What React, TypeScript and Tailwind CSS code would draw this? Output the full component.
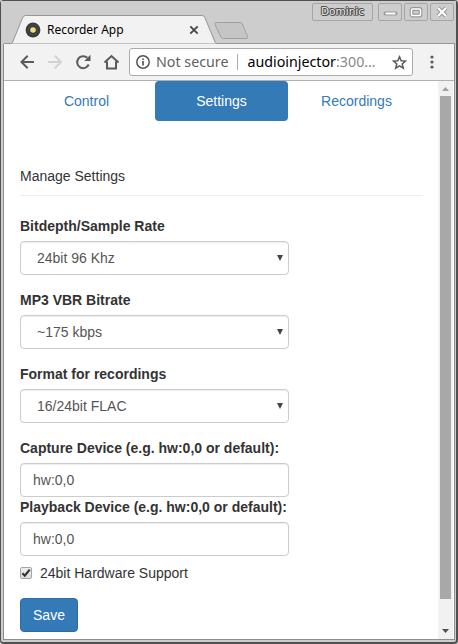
import React from "react";

function TitleBar() {
  return (
    <header className="relative h-[43px] shrink-0 bg-[#cdcdcd]">
      <svg className="absolute -left-px top-0" width="458" height="43" viewBox="0 0 458 43" fill="none">
        <path d="M4 43V42.5H10.5Q12 42.5 12.7 41L22.5 17Q23.3 14.5 25.5 14.5H202Q204 14.5 204.8 16.5L215 41Q215.7 42.5 217 42.5H455V43Z" fill="#f2f2f2" stroke="#969696" />
        <path d="M216.5 21.5H240.5Q241.8 21.5 242.3 23L247.5 35.5Q248 37.5 246.5 37.5H223.5Q221.5 37.5 220.8 36L215 23.5Q214.4 21.5 216.5 21.5Z" fill="#c5c5c5" stroke="#a0a0a0" />
      </svg>
      <div className="relative flex h-full items-start">
        <div className="ml-[24px] mt-[18px] flex h-[22px] w-[174px] items-center">
          <svg className="shrink-0" width="16" height="16" viewBox="0 0 16 16">
            <circle cx="8" cy="8" r="7.4" fill="#3b3b3b" />
            <circle cx="8" cy="8" r="5" fill="none" stroke="#4d4d4b" strokeWidth="1" />
            <circle cx="8" cy="8" r="2.8" fill="#eedf86" />
          </svg>
          <span className="ml-[6px] whitespace-nowrap text-[12px] leading-[22px] text-black">Recorder App</span>
          <svg className="ml-auto" width="10" height="10" viewBox="0 0 10 10" stroke="#454545" strokeWidth="1.8">
            <path d="M1.3 1.3L8.7 8.7M8.7 1.3L1.3 8.7" />
          </svg>
        </div>
        <div className="ml-auto mr-[2px] mt-[2px] flex gap-[2px]">
          <div className="mr-[3px] flex h-[18px] w-[61px] items-center justify-center rounded-[2px] border border-[#a5a5a5] font-['DejaVu_Sans'] text-[10.5px] text-[#eee] [text-shadow:1px_0_0_#4c4c4c,-1px_0_0_#4c4c4c,0_1px_0_#4c4c4c,0_-1px_0_#4c4c4c,1px_1px_0_#666,-1px_-1px_0_#666]">Dominic</div>
          <WindowButton><path d="M7.5 10.5H17.5" stroke="#999" strokeWidth="4" strokeLinecap="round" /><path d="M7.5 10.5H17.5" stroke="#fff" strokeWidth="2" /></WindowButton>
          <WindowButton><rect x="7.5" y="6" width="9" height="6.5" rx="1" stroke="#999" strokeWidth="3.8" /><rect x="7.5" y="6" width="9" height="6.5" rx="1" stroke="#fff" strokeWidth="1.5" /></WindowButton>
          <WindowButton><path d="M8 5L16 13M16 5L8 13" stroke="#999" strokeWidth="4" /><path d="M8 5L16 13M16 5L8 13" stroke="#fff" strokeWidth="2" /></WindowButton>
        </div>
      </div>
    </header>
  );
}

function WindowButton({ children }: { children: React.ReactNode }) {
  return (
    <div className="h-[18px] w-[24px] rounded-[2px] border border-[#a5a5a5]">
      <svg className="-ml-px -mt-px" width="24" height="18" viewBox="0 0 24 18" fill="none">{children}</svg>
    </div>
  );
}

function Toolbar() {
  return (
    <div className="flex h-[37px] shrink-0 items-center border-b border-[#b0b0b0] bg-[#f2f2f2] pl-[15px]">
      <svg width="110" height="18" viewBox="0 0 110 18" fill="none" stroke="#5a5a5a" strokeWidth="2">
        <path d="M15 9H2.5M8.7 2.8L2.5 9L8.7 15.2" />
        <path d="M29 9H42M35.8 2.8L42 9L35.8 15.2" stroke="#d2d2d2" />
        <path d="M69.7 11.5A6 6 0 1 1 68.3 4.8" />
        <path d="M71.5 1.8V8H65.3Z" fill="#5a5a5a" stroke="none" />
        <path d="M85.5 9.6L92.5 3L99.5 9.6M88 8.4V15.5H97V8.4" />
      </svg>
      <div className="flex h-[28px] w-[284px] items-center rounded-[3px] border border-[#ababab] bg-white pl-[6px] pr-[5px] text-[14.25px] leading-[26px]">
        <svg className="shrink-0" width="14" height="14" viewBox="0 0 14 14" fill="none" stroke="#555" strokeWidth="1.5">
          <circle cx="7" cy="7" r="6.2" />
          <path d="M7 6V10.5M7 3.4V5" strokeWidth="1.7" />
        </svg>
        <span className="ml-[6px] whitespace-nowrap text-[#5f5f5f]">Not secure</span>
        <i className="ml-[9px] h-[16px] w-px shrink-0 bg-[#aaa]" />
        <span className="ml-[9px] whitespace-nowrap text-[#888]"><span className="text-black">audioinjector</span>:300…</span>
        <svg className="ml-auto shrink-0" width="15" height="15" viewBox="0 0 15 15" fill="none" stroke="#5a5a5a" strokeWidth="1.5">
          <path d="M7.5 1.8L9.2 5.8L13.5 6.1L10.2 9L11.3 13.2L7.5 10.9L3.7 13.2L4.8 9L1.5 6.1L5.8 5.8Z" />
        </svg>
      </div>
      <svg className="ml-[16.5px]" width="4" height="14" viewBox="0 0 4 14" fill="#5a5a5a">
        <circle cx="2" cy="2" r="1.6" /><circle cx="2" cy="7" r="1.6" /><circle cx="2" cy="12" r="1.6" />
      </svg>
    </div>
  );
}

const fieldClass = "flex h-[34px] w-[269px] items-center rounded-[4px] border border-[#ccc] bg-white text-[#555] shadow-[inset_0_1px_1px_rgba(0,0,0,0.075)]";

function SelectField({ label, value }: { label: string; value: string }) {
  return (
    <div className="mb-[15px]">
      <div className="mb-[5px] font-bold">{label}</div>
      <div className={`${fieldClass} justify-between pl-4 pr-[5px]`}>
        <span>{value}</span>
        <svg width="6" height="6" viewBox="0 0 6 6" fill="#444"><path d="M0 0H6L3 6Z" /></svg>
      </div>
    </div>
  );
}

function TextField({ label, value }: { label: string; value: string }) {
  return (
    <div>
      <div className="mb-[5px] whitespace-nowrap font-bold">{label}</div>
      <div className={`${fieldClass} px-3`}>{value}</div>
    </div>
  );
}

function Page() {
  return (
    <main className="min-w-0 flex-1 bg-white px-[15px] font-['Liberation_Sans',Arial,sans-serif] text-[14px] leading-[20px] text-[#333]">
      <nav className="grid grid-cols-3 gap-[2px] text-center text-[#337ab7]">
        <a className="py-[10px]">Control</a>
        <a className="rounded-[4px] bg-[#337ab7] py-[10px] text-white">Settings</a>
        <a className="py-[10px]">Recordings</a>
      </nav>
      <div className="mb-5 mt-[45px] border-b border-[#eee] pb-[9px]">Manage Settings</div>
      <SelectField label="Bitdepth/Sample Rate" value="24bit 96 Khz" />
      <SelectField label="MP3 VBR Bitrate" value="~175 kbps" />
      <SelectField label="Format for recordings" value="16/24bit FLAC" />
      <TextField label="Capture Device (e.g. hw:0,0 or default):" value="hw:0,0" />
      <TextField label="Playback Device (e.g. hw:0,0 or default):" value="hw:0,0" />
      <div className="mt-[7px] flex items-center">
        <span className="flex h-[12px] w-[12px] items-center justify-center rounded-[2px] border border-[#a5a5a5] bg-linear-to-b from-[#eee] to-[#ddd]">
          <svg className="shrink-0" width="10" height="10" viewBox="0 0 10 10" fill="none" stroke="#333" strokeWidth="2.2"><path d="M1.4 5.2L3.8 7.6L8.7 1.6" /></svg>
        </span>
        <span className="ml-[8px]">24bit Hardware Support</span>
      </div>
      <button className="mt-[15px] block h-[34px] w-[58px] rounded-[4px] border border-[#2e6da4] bg-[#337ab7] text-white">Save</button>
    </main>
  );
}

function Scrollbar() {
  return (
    <div className="flex w-[15px] shrink-0 flex-col items-center bg-[#f1f1f1]">
      <svg className="mt-[6px] shrink-0" width="7" height="4" viewBox="0 0 7 4" fill="#a0a0a0"><path d="M0 4L3.5 0L7 4Z" /></svg>
      <div className="mt-[5px] h-[503px] w-[11px] shrink-0 bg-[#a8a8a8]" />
      <svg className="mt-[30px] shrink-0" width="7" height="4" viewBox="0 0 7 4" fill="#505050"><path d="M0 0L3.5 4L7 0Z" /></svg>
    </div>
  );
}

export default function App() {
  return (
    <div className="h-[644px] w-[458px] overflow-hidden bg-[#cdcdcd] font-['Noto_Sans',sans-serif]">
      <div className="flex h-[644px] w-[458px] flex-col rounded-[4px] border border-b-2 border-r-2 border-[#505050] bg-[#cdcdcd]">
        <TitleBar />
        <div className="mb-[2px] ml-[2px] mr-px flex min-h-0 flex-1 flex-col border-x border-b border-[#8e8e8e] bg-white">
          <Toolbar />
          <div className="flex min-h-0 flex-1 px-px">
            <Page />
            <Scrollbar />
          </div>
        </div>
      </div>
    </div>
  );
}
